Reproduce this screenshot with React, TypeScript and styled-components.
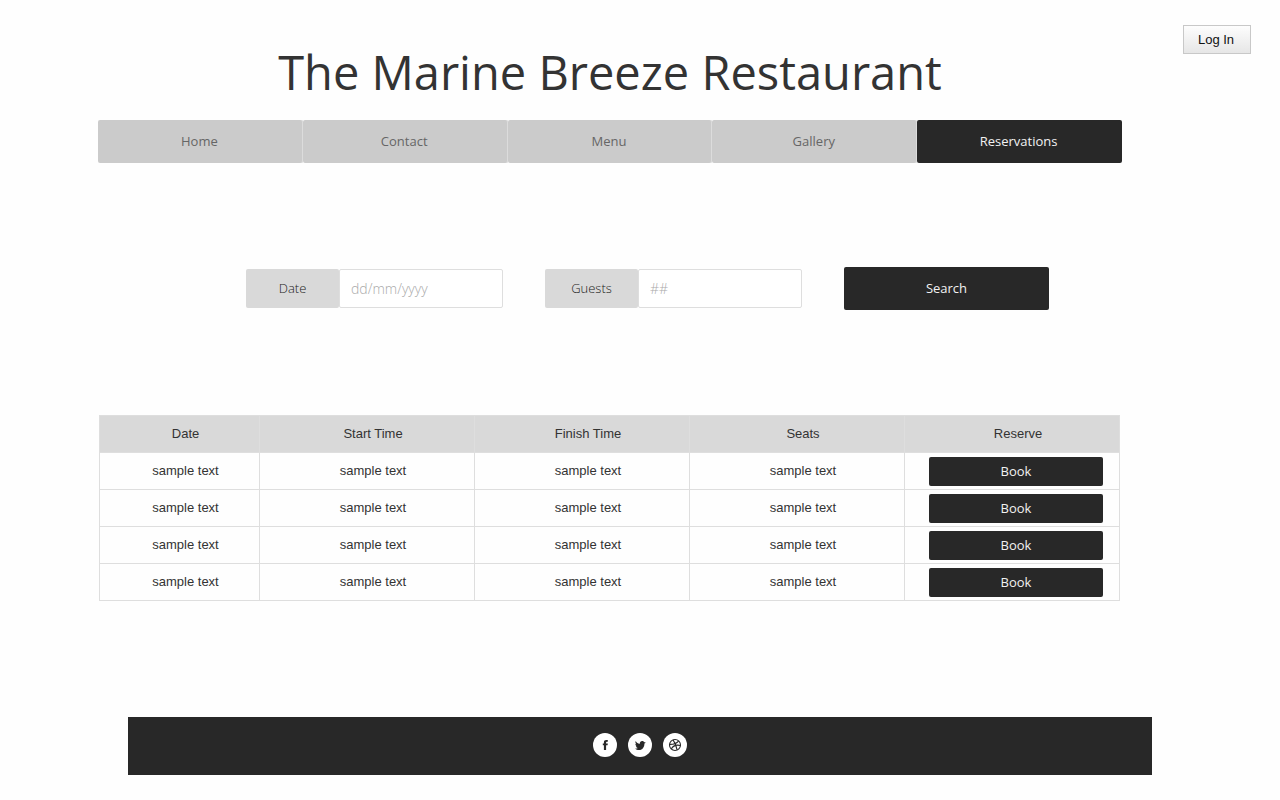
import React from "react";
import styled, { createGlobalStyle } from "styled-components";

const GlobalStyle = createGlobalStyle`
  * { box-sizing: border-box; }
  body {
    margin: 0;
    background: #fefefe;
    color: #333;
    font-family: "Open Sans", "Noto Sans", sans-serif;
    font-size: 13px;
    line-height: 18px;
  }
  button, input { font: inherit; margin: 0; }
`;

const Page = styled.div`
  display: flex;
  flex-direction: column;
  min-height: 100vh;
`;

const TopBar = styled.div`
  display: flex;
  justify-content: flex-end;
  height: 42px;
  padding: 25px 29px 0;
`;

const LoginButton = styled.button`
  flex: none;
  width: 68px;
  height: 29px;
  padding: 0 2px 0 0;
  border: 1px solid #c8c8c8;
  background: linear-gradient(#fdfdfd, #e6e6e6);
  color: #111;
  font-family: "Liberation Sans", Arial, sans-serif;
`;

const Content = styled.div`
  padding: 0 158px 0 98px;
`;

const Title = styled.h1`
  margin: 0;
  font-size: 47px;
  line-height: 60px;
  font-weight: 400;
  text-align: center;
  white-space: nowrap;
`;

const Nav = styled.nav`
  display: flex;
  margin-top: 18px;
`;

const NavLink = styled.a<{ $active?: boolean }>`
  flex: 1;
  height: 43px;
  padding-right: 2px;
  line-height: 43px;
  border-radius: 2px;
  box-shadow: ${(p) => (p.$active ? "none" : "inset -1px 0 #dcdcdc")};
  background: ${(p) => (p.$active ? "#282828" : "#cbcbcb")};
  color: ${(p) => (p.$active ? "#f2f2f2" : "#666")};
  text-align: center;
  text-decoration: none;
`;

const SearchForm = styled.form`
  display: flex;
  align-items: center;
  justify-content: center;
  gap: 42px;
  margin-top: 104px;
  padding-left: 75px;
`;

const Field = styled.div`
  display: flex;
  height: 39px;
`;

const FieldLabel = styled.label`
  width: 93px;
  border-radius: 2px;
  background: #d9d9d9;
  color: #222;
  font-weight: 300;
  line-height: 39px;
  text-align: center;
`;

const FieldInput = styled.input`
  width: 164px;
  padding: 0 11px;
  border: 1px solid #dedede;
  border-radius: 2px;
  background: #fff;
  color: #333;
  font-size: 14px;
  font-weight: 300;
  &::placeholder { color: #aaa; opacity: 1; }
`;

const DarkButton = styled.button`
  padding: 0;
  border: 0;
  border-radius: 2px;
  background: #282828;
  color: #f2f2f2;
  font-family: "Open Sans", "Noto Sans", sans-serif;
  line-height: 17px;
`;

const SearchButton = styled(DarkButton)`
  width: 205px;
  height: 43px;
`;

const BookButton = styled(DarkButton)`
  display: block;
  width: 100%;
  height: 29px;
`;

const Table = styled.table`
  width: calc(100% - 3px);
  margin: 105px 2px 0 1px;
  border-collapse: collapse;
  table-layout: fixed;
  font-family: "Liberation Sans", Arial, sans-serif;
`;

const DateColumn = styled.col`
  width: 160px;
`;

const HeadCell = styled.th`
  height: 37px;
  padding: 0 0 0 12px;
  border: 1px solid #dedede;
  background: #d9d9d9;
  font-weight: 400;
`;

const Cell = styled.td`
  height: 37px;
  padding: 0 0 0 12px;
  border: 1px solid #dedede;
  text-align: center;
`;

const ActionCell = styled(Cell)`
  padding: 0 16px 0 24px;
`;

const Footer = styled.footer`
  display: flex;
  align-items: center;
  justify-content: center;
  gap: 11px;
  height: 58px;
  margin: 116px 128px 25px;
  background: #282828;
  padding-bottom: 2px;
`;

const SocialLink = styled.a`
  display: flex;
  align-items: center;
  justify-content: center;
  width: 24px;
  height: 24px;
  border-radius: 50%;
  background: #fff;
  color: #282828;
`;

const pages = ["Home", "Contact", "Menu", "Gallery", "Reservations"];
const columns = ["Date", "Start Time", "Finish Time", "Seats", "Reserve"];
const slots = Array.from({ length: 4 }, () => ({
  date: "sample text",
  start: "sample text",
  finish: "sample text",
  seats: "sample text",
}));

const FacebookIcon = () => (
  <svg width="24" height="24" viewBox="0 0 24 24" fill="currentColor" aria-hidden="true">
    <path d="M10.900 17v-4.700H9.800v-1.800h1.100V9.400c0-1.600.9-2.400 2.400-2.400h1.500v1.700h-.9c-.6 0-.8.300-.8.800v1h1.700l-.2 1.800h-1.500V17z" />
  </svg>
);

const TwitterIcon = () => (
  <svg width="24" height="24" viewBox="0 0 24 24" fill="currentColor" aria-hidden="true">
    <path d="M7.700 8c1 1.700 2.300 2.600 3.900 2.900.2-1.700 1.200-2.900 2.600-2.900.8 0 1.500.3 1.800 1l1.900.8-1.500.6c.2 3.500-2 6.500-5.200 6.600-1.700 0-3.100-.5-4-1.500 1.100.2 1.900 0 2.600-.6-1.100-.3-1.700-.8-1.900-1.700h.8c-.9-.5-1.300-1.300-1.300-2.200l.9.300c-.9-1-1.100-2.100-.6-3.300z" />
  </svg>
);

const DribbbleIcon = () => (
  <svg width="24" height="24" viewBox="0 0 24 24" fill="none" stroke="currentColor" strokeWidth="1.100" aria-hidden="true">
    <circle cx="12" cy="12" r="5.500" />
    <path d="M10 6.900c2 2.600 3.300 5.800 4 9.700M6.600 11.400c3.700.1 6.800-.7 9-3.300M8.300 16c1.600-3 4.700-4.500 9.100-3.500" />
  </svg>
);

export default function App() {
  return (
    <Page>
      <GlobalStyle />
      <TopBar>
        <LoginButton type="button">Log In</LoginButton>
      </TopBar>
      <Content>
        <Title>The Marine Breeze Restaurant</Title>
        <Nav>
          {pages.map((name) => (
            <NavLink key={name} href="#" $active={name === "Reservations"}>
              {name}
            </NavLink>
          ))}
        </Nav>
        <SearchForm onSubmit={(e) => e.preventDefault()}>
          <Field>
            <FieldLabel htmlFor="date">Date</FieldLabel>
            <FieldInput id="date" type="text" placeholder="dd/mm/yyyy" />
          </Field>
          <Field>
            <FieldLabel htmlFor="guests">Guests</FieldLabel>
            <FieldInput id="guests" type="text" placeholder="##" />
          </Field>
          <SearchButton type="submit">Search</SearchButton>
        </SearchForm>
        <Table>
          <colgroup>
            <DateColumn />
            <col span={4} />
          </colgroup>
          <thead>
            <tr>
              {columns.map((name) => (
                <HeadCell key={name} scope="col">{name}</HeadCell>
              ))}
            </tr>
          </thead>
          <tbody>
            {slots.map((slot, i) => (
              <tr key={i}>
                <Cell>{slot.date}</Cell>
                <Cell>{slot.start}</Cell>
                <Cell>{slot.finish}</Cell>
                <Cell>{slot.seats}</Cell>
                <ActionCell>
                  <BookButton type="button">Book</BookButton>
                </ActionCell>
              </tr>
            ))}
          </tbody>
        </Table>
      </Content>
      <Footer>
        <SocialLink href="#" aria-label="Facebook"><FacebookIcon /></SocialLink>
        <SocialLink href="#" aria-label="Twitter"><TwitterIcon /></SocialLink>
        <SocialLink href="#" aria-label="Dribbble"><DribbbleIcon /></SocialLink>
      </Footer>
    </Page>
  );
}
